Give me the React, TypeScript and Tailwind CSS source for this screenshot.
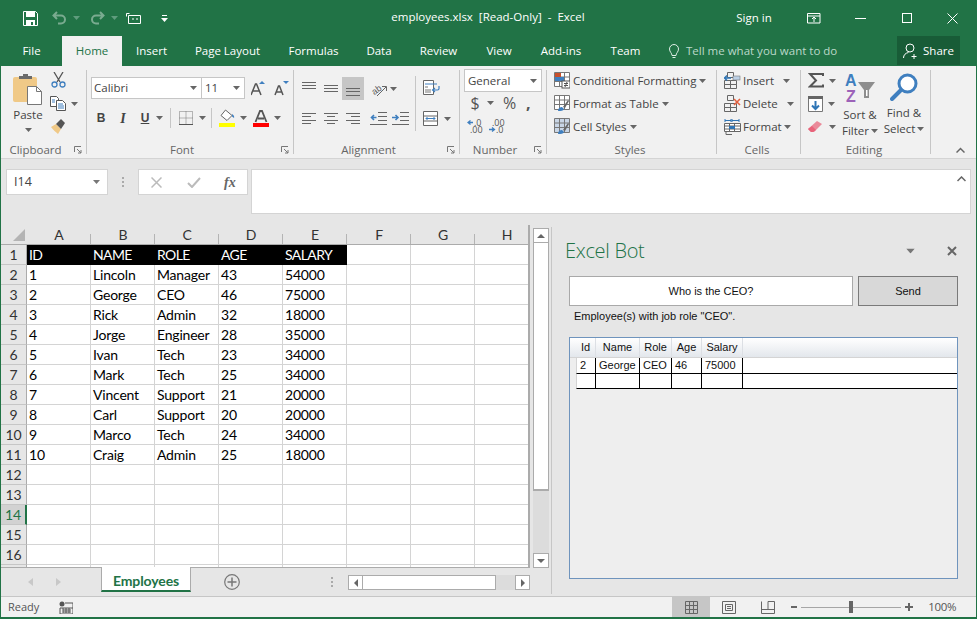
import React from "react";

const Caret = ({ c = "#666", className = "" }: { c?: string; className?: string }) => (
  <svg width="7" height="4" viewBox="0 0 7 4" className={className}><path d="M0 0h7L3.5 4z" fill={c} /></svg>
);

const Launcher = () => (
  <svg width="8" height="8" viewBox="0 0 8 8"><path d="M.5 6V.5H7M3 3l4 4M7 4v3H4" fill="none" stroke="#777" /></svg>
);

const Lines = ({ rows }: { rows: [number, number, number][] }) => (
  <svg width="16" height="14" viewBox="0 0 16 14">
    {rows.map(([x, y, w], i) => <rect key={i} x={x} y={y} width={w} height="1" fill="#666" />)}
  </svg>
);

const Save = () => (
  <svg width="15" height="15" viewBox="0 0 15 15"><path d="M.5.5h12l2 2v12H.5z" fill="none" stroke="#fff" /><rect x="3" y="1" width="9" height="5" fill="#fff" /><rect x="3" y="9" width="9" height="6" fill="#fff" /><rect x="8" y="11" width="2" height="3" fill="#217346" /></svg>
);
const Undo = ({ flip }: { flip?: boolean }) => (
  <svg width="15" height="14" viewBox="0 0 15 14" style={{ transform: flip ? "scaleX(-1)" : undefined }} className="opacity-40"><path d="M5 1 1.5 4.5 5 8M2 4.5h7a4 4 0 0 1 0 8H6" fill="none" stroke="#fff" strokeWidth="2" /></svg>
);

const PasteIcon = () => (
  <svg width="30" height="31" viewBox="0 0 30 31">
    <rect x="0" y="3" width="24" height="25" rx="2" fill="#f0c987" />
    <path d="M6 5V2h4V0h5v2h4v3z" fill="#6b6b6b" />
    <path d="M14.500 12.500h9l5 5v13h-14z" fill="#fff" stroke="#777" />
    <path d="M23.500 12.500v5h5" fill="none" stroke="#777" />
  </svg>
);
const Cut = () => (
  <svg width="15" height="16" viewBox="0 0 15 16"><path d="M3 0l6 10M12 0L6 10" stroke="#555" strokeWidth="1.300" fill="none" /><circle cx="3.500" cy="12.500" r="2.500" fill="none" stroke="#3f7fbf" strokeWidth="1.300" /><circle cx="11.500" cy="12.500" r="2.500" fill="none" stroke="#3f7fbf" strokeWidth="1.300" /></svg>
);
const Copy = () => (
  <svg width="16" height="15" viewBox="0 0 16 15"><path d="M.5.5h6l2 2v8H.5z" fill="#fff" stroke="#555" /><path d="M6.500 4.500h6l3 3v7h-9z" fill="#fff" stroke="#555" /><path d="M8 8h5M8 10h6M8 12h6M2 4h3M2 6h3" stroke="#3f7fbf" /></svg>
);
const Painter = () => (
  <svg width="17" height="16" viewBox="0 0 17 16"><path d="M1 9l5-3 5 5-3 5C6 14 3 12 1 9z" fill="#f0c987" /><path d="M6 6l5-5 4 4-4 6z" fill="#555" /></svg>
);
const FontGrow = ({ up }: { up: boolean }) => (
  <svg width="15" height="15" viewBox="0 0 15 15">
    <path d={up ? "M0 14 4.500 3h1L10 14M2 10h6" : "M1 14 4.500 5h1L9 14M2.500 11h5"} fill="none" stroke="#555" strokeWidth="1.500" />
    <path d={up ? "M8 3l3-3 3 3z" : "M9 0h6l-3 3z"} fill="#3f7fbf" />
  </svg>
);
const Borders = () => (
  <svg width="14" height="14" viewBox="0 0 14 14">
    <path d="M.5.5h13v13H.5zM7 .5v13M.5 7h13" fill="none" stroke="#777" strokeDasharray="1 1" />
    <rect y="13" width="14" height="1" fill="#555" />
  </svg>
);
const FillColor = () => (
  <svg width="16" height="18" viewBox="0 0 16 18">
    <path d="M6.500 1 13 6.500 8 11.500 2 6.500z" fill="#fff" stroke="#666" />
    <path d="M13 5c2 1 2.500 3 2 4l-2-1.500z" fill="#3f7fbf" />
    <rect y="14" width="16" height="4" fill="#ffff00" />
  </svg>
);
const FontColor = () => (
  <svg width="16" height="17" viewBox="0 0 16 17">
    <path d="M2.500 12 7 1h2l4.500 11M5 8.500h6" fill="none" stroke="#555" strokeWidth="1.800" />
    <rect y="13" width="16" height="4" fill="#ff0000" />
  </svg>
);
const Orient = () => (
  <svg width="18" height="16" viewBox="0 0 18 16"><text x="1" y="12" fontSize="9" fill="#555" transform="rotate(-35 6 8)" fontFamily="Liberation Sans">ab</text><path d="M7 15 16 6M12 5.500h4.500V10" fill="none" stroke="#666" /></svg>
);
const Wrap = () => (
  <svg width="17" height="15" viewBox="0 0 17 15"><path d="M.5.5h10v14H.5z" fill="#fff" stroke="#666" /><path d="M2 4h12" stroke="#3f7fbf" /><path d="M2 7h3M2 10h6M2 12h6" stroke="#777" /><path d="M16 6v2.500a1.500 1.500 0 0 1-1.500 1.500H10M12 8l-2.500 2 2.500 2" fill="none" stroke="#3f7fbf" strokeWidth="1.200" /></svg>
);
const Merge = () => (
  <svg width="15" height="15" viewBox="0 0 15 15"><path d="M.5.500h14v14H.5zM.5 5h14M.5 10h14" fill="#fff" stroke="#666" /><path d="M3 7.500h9M4.500 6 3 7.500 4.500 9M10.500 6 12 7.500 10.500 9" fill="none" stroke="#3f7fbf" /></svg>
);
const Indent = ({ inc }: { inc: boolean }) => (
  <svg width="17" height="14" viewBox="0 0 17 14">
    <path d="M8 .5h9M8 4.500h9M8 8.500h9M0 12.500h17" stroke="#666" />
    <path d={inc ? "M0 5.500h5M3.500 3l2.500 2.500L3.500 8" : "M1.500 5.500h5M4 3 1.500 5.500 4 8"} fill="none" stroke="#3f7fbf" strokeWidth="1.600" />
  </svg>
);
const Dec = ({ inc }: { inc: boolean }) => (
  <svg width="16" height="15" viewBox="0 0 16 15" fontFamily="Open Sans" fontSize="9" fill="#555">
    {inc ? <>
      <text x="3" y="7">.00</text>
      <path d="M0 10.500h5M3 8.500l2.500 2-2.500 2" fill="none" stroke="#3f7fbf" strokeWidth="1.300" />
      <text x="7" y="14">.0</text>
    </> : <>
      <path d="M6 3.500H1M3.500 1.500 1 3.500l2.500 2" fill="none" stroke="#3f7fbf" strokeWidth="1.300" />
      <text x="7" y="7">.0</text>
      <text x="3" y="14">.00</text>
    </>}
  </svg>
);
const StyleIcon = ({ kind }: { kind: number }) => (
  <svg width="16" height="17" viewBox="0 0 16 17">
    <path d="M.5.500h15v14H.5zM.5 5h15M.5 9.500h15M5.500.5v14M10.500.5v14" fill={kind === 2 ? "#c9d6e6" : "#fff"} stroke="#777" />
    {kind === 0 && <><rect x="1" y="1" width="6" height="4" fill="#c8502c" /><rect x="1" y="5" width="9" height="4" fill="#3f7fbf" /><rect x="8" y="9" width="8" height="7" fill="#fff" stroke="#555" /><path d="M10 11.500h4M10 13.500h4M11 15l2-5" stroke="#555" /></>}
    {kind !== 0 && <><path d="M9 12l5-7 1 1-4 7z" fill="#666" /><path d="M4 16c0-3 2-4 4-4l2 2c-1 2-3 2-6 2z" fill="#3f7fbf" /></>}
  </svg>
);
const CellIcon = ({ kind }: { kind: number }) => (
  <svg width="17" height="17" viewBox="0 0 17 17">
    {kind < 2 ? <>
      <path d="M3.500.5h6v5h-6zM.5 8.500h6v4h-6zM6.500 8.500h6v4h-6zM.5 12.500h6v4h-6zM6.500 12.500h6v4h-6z" fill="none" stroke="#666" />
      {kind === 0 ? <><rect x="9" y="4" width="7" height="4" fill="#bcd0e6" stroke="#777" strokeWidth=".6" /><path d="M0 6h7M3 3.500.5 6 3 8.500" fill="none" stroke="#2f75b5" strokeWidth="1.500" /></> : <path d="M10 4l6 6M16 4l-6 6" stroke="#e2603f" strokeWidth="1.600" />}
    </> : <>
      <path d="M1 1v3M1 2.500h6M7 1v3M8 1v3M8 2.500h7M15 1v3" stroke="#2f75b5" fill="none" />
      <path d="M.5 5.500h16v8H.5zM.5 8h16M.5 11h16M5.500 5.500v8M10.500 5.500v8" fill="#fff" stroke="#666" />
      <rect x="5" y="8" width="6" height="3" fill="#2f75b5" />
      <path d="M2 14v2.500h6" fill="none" stroke="#666" />
    </>}
  </svg>
);
const Sigma = () => (
  <svg width="16" height="15" viewBox="0 0 16 15"><path d="M15 3V1H2l6 6.500L2 13.500h13v-2" fill="none" stroke="#555" strokeWidth="2" /></svg>
);
const FillDown = () => (
  <svg width="15" height="16" viewBox="0 0 15 16"><path d="M.5.500h14v15H.5z" fill="#fff" stroke="#777" /><rect width="15" height="3" fill="#666" /><path d="M7.500 5v8M4 9.500l3.500 3.500L11 9.500" fill="none" stroke="#2f75b5" strokeWidth="2" /></svg>
);
const Eraser = () => (
  <svg width="15" height="12" viewBox="0 0 15 12"><path d="M0 8 9 0l5 3-8 8H3z" fill="#ea8a9a" /><path d="M0 8l4-3 4 4-3 2H3z" fill="#e8637a" /></svg>
);
const SortIcon = () => (
  <svg width="31" height="30" viewBox="0 0 31 30">
    <text x="0" y="13" fontSize="16" fontWeight="700" fill="#3f7fbf" fontFamily="Liberation Sans">A</text>
    <text x="1" y="29" fontSize="16" fontWeight="700" fill="#9c62b8" fontFamily="Liberation Sans">Z</text>
    <path d="M13 9h17l-6 8v8h-5v-8z" fill="#8e8e8e" />
    <path d="M21 17h1.500v6H21z" fill="#fff" />
  </svg>
);
const FindIcon = () => (
  <svg width="28" height="28" viewBox="0 0 28 28"><circle cx="17.500" cy="10.500" r="8.500" fill="#fff" stroke="#3f7fbf" strokeWidth="3" /><path d="M11 17 2 26" stroke="#3f7fbf" strokeWidth="4" strokeLinecap="round" /></svg>
);

const Group = ({ w, label, launcher, children }: { w: string; label: string; launcher?: boolean; children: React.ReactNode }) => (
  <div className={`${w} h-[84px] mt-[4px] border-r border-[#c6c6c6] flex flex-col`}>
    <div className="h-[74px] shrink-0 flex">{children}</div>
    <div className={`relative h-[12px] shrink-0 flex items-center justify-center text-[11.500px] leading-[12px] text-[#666] ${launcher ? "pr-[16px]" : "pr-[3px]"}`}>
      <span>{label}</span>
      {launcher && <span className="absolute right-[4px] top-[2px] flex"><Launcher /></span>}
    </div>
  </div>
);

const Small = ({ children, cls = "" }: { children: React.ReactNode; cls?: string }) => (
  <div className={`flex items-center h-[23px] ${cls}`}>{children}</div>
);

const tabs: [string, string][] = [["File", "w-[61px]"], ["Home", "w-[60px]"], ["Insert", "w-[59px]"], ["Page Layout", "w-[93px]"], ["Formulas", "w-[79px]"], ["Data", "w-[52px]"], ["Review", "w-[67px]"], ["View", "w-[54px]"], ["Add-ins", "w-[70px]"], ["Team", "w-[59px]"]];

const TitleBar = () => (
  <div className="relative h-[36px] bg-[#217346] flex items-center text-white">
    <div className="ml-[22px] flex"><Save /></div>
    <div className="ml-[14px] flex"><Undo /></div>
    <Caret c="#5f9c7d" className="ml-[6px]" />
    <div className="ml-[10px] flex"><Undo flip /></div>
    <Caret c="#5f9c7d" className="ml-[6px]" />
    <svg width="15" height="11" viewBox="0 0 15 11" className="ml-[8px]"><path d="M.5.500h3M.5.500v3M2.500 2.500h12v8h-12z" fill="none" stroke="#fff" /><path d="M6 6h2M10 6h2" stroke="#fff" /></svg>
    <svg width="7" height="7" viewBox="0 0 7 7" className="ml-[20px]"><path d="M1 .5h5" stroke="#fff" /><path d="M0 3h7L3.500 7z" fill="#fff" /></svg>
    <div className="absolute left-[391px] top-0 h-[33px] w-[192px] flex items-center justify-center whitespace-pre">employees.xlsx  [Read-Only]  -  Excel</div>
    <div className="ml-auto flex items-center">
      <span className="w-[40px] text-center">Sign in</span>
      <svg width="14" height="11" viewBox="0 0 14 11" className="ml-[33px]"><path d="M.5.500h12.500v9.500H.5zM.5 3h12.500M7 9V4M5 6l2-2 2 2" fill="none" stroke="#fff" /></svg>
      <svg width="11" height="1" viewBox="0 0 11 1" className="ml-[34px]"><rect width="11" height="1" fill="#fff" /></svg>
      <svg width="10" height="10" viewBox="0 0 10 10" className="ml-[36px]"><rect x=".5" y=".5" width="9" height="9" fill="none" stroke="#fff" /></svg>
      <svg width="11" height="11" viewBox="0 0 11 11" className="ml-[35px] mr-[18px]"><path d="M.5.500l10 10M10.500.500l-10 10" stroke="#fff" /></svg>
    </div>
  </div>
);

const TabsRow = () => (
  <div className="h-[30px] bg-[#217346] flex items-stretch text-white">
    {tabs.map(([t, w]) => (
      <div key={t} className={`${w} flex items-center justify-center ${t === "Home" ? "bg-[#f1f1f1] text-[#217346]" : ""}`}>{t}</div>
    ))}
    <svg width="10" height="15" viewBox="0 0 10 15" className="ml-[14px] self-center"><path d="M3 11.500C3 9 .5 8 .5 5a4.500 4.500 0 0 1 9 0c0 3-2.500 4-2.500 6.500zM3.500 13.500h3" fill="none" stroke="#dfeee6" /></svg>
    <div className="ml-[7px] flex items-center text-[#bcd8c9]">Tell me what you want to do</div>
    <div className="ml-auto mr-[16px] mb-[1px] w-[63px] bg-[#185c37] flex items-center justify-center gap-[3px]">
      <svg width="17" height="16" viewBox="0 0 17 16"><circle cx="7" cy="5" r="4" fill="none" stroke="#fff" /><path d="M.5 15c0-3 2-5 5-5.500M11 11v5M8.500 13.500h5" fill="none" stroke="#fff" /></svg>
      <span>Share</span>
    </div>
  </div>
);

const Ribbon = () => (
  <div className="relative h-[93px] bg-[#f1f1f1] border-b border-[#d4d4d4] flex text-[#444]">
    <Group w="w-[86px]" label="Clipboard" launcher>
      <div className="ml-[12px] w-[30px] flex flex-col items-center">
        <div className="mt-[4px] flex"><PasteIcon /></div>
        <div className="mt-[2px] leading-[16px]">Paste</div>
        <Caret className="mt-[5px]" />
      </div>
      <div className="ml-[7px] flex flex-col">
        <div className="mt-[2px] flex h-[16px] ml-px"><Cut /></div>
        <div className="mt-[8px] flex items-center h-[15px]"><Copy /><Caret className="ml-[5px]" /></div>
        <div className="mt-[7px] flex"><Painter /></div>
      </div>
    </Group>
    <Group w="w-[207px]" label="Font" launcher>
      <div className="flex flex-col">
        <div className="mt-[7px] flex items-center">
          <div className="ml-[4px] w-[111px] h-[22px] bg-white border border-[#c6c6c6] flex items-center px-[2px] justify-between"><span>Calibri</span><Caret className="mr-[2px]" /></div>
          <div className="-ml-px w-[44px] h-[22px] bg-white border border-[#c6c6c6] flex items-center px-[3px] justify-between"><span>11</span><Caret className="mr-px" /></div>
          <div className="ml-[6px] flex"><FontGrow up /></div>
          <div className="ml-[8px] flex"><FontGrow up={false} /></div>
        </div>
        <div className="mt-[8px] flex items-center h-[22px] text-[14px]">
          <span className="ml-[9px] w-[10px] font-bold font-['Liberation_Sans',sans-serif] text-[12px] text-center">B</span>
          <span className="ml-[12px] w-[10px] italic font-bold font-['Liberation_Serif',serif] text-center">I</span>
          <span className="ml-[12px] w-[10px] underline font-bold font-['Liberation_Sans',sans-serif] text-[12px] text-center">U</span>
          <Caret className="ml-[6px]" />
          <div className="ml-[7px] w-px h-[20px] bg-[#c6c6c6]" />
          <div className="ml-[8px] flex"><Borders /></div>
          <Caret className="ml-[6px]" />
          <div className="ml-[5px] w-px h-[20px] bg-[#c6c6c6]" />
          <div className="ml-[7px] flex"><FillColor /></div>
          <Caret className="ml-[5px]" />
          <div className="ml-[6px] flex"><FontColor /></div>
          <Caret className="ml-[5px]" />
        </div>
      </div>
    </Group>
    <Group w="w-[166px]" label="Alignment" launcher>
      <div className="w-[121px] flex flex-col shrink-0">
        <div className="mt-[7px] flex items-center h-[23px]">
          <div className="ml-[8px] flex"><Lines rows={[[0, 0, 14], [0, 3, 14], [0, 6, 14]]} /></div>
          <div className="ml-[6px] flex"><Lines rows={[[0, 3, 14], [0, 6, 14], [0, 9, 14]]} /></div>
          <div className="ml-[2px] w-[22px] h-[23px] bg-[#c6c6c6] flex items-center justify-center pl-px"><Lines rows={[[0, 6, 14], [0, 9, 14], [0, 13, 14]]} /></div>
          <div className="ml-[6px] flex"><Orient /></div>
          <Caret className="ml-[2px]" />
        </div>
        <div className="mt-[7px] flex items-center h-[23px]">
          <div className="ml-[8px] flex"><Lines rows={[[0, 1, 14], [0, 4, 9], [0, 8, 14], [0, 11, 9]]} /></div>
          <div className="ml-[6px] flex"><Lines rows={[[0, 1, 14], [3, 4, 8], [0, 8, 14], [3, 11, 8]]} /></div>
          <div className="ml-[6px] flex"><Lines rows={[[0, 1, 14], [5, 4, 9], [0, 8, 14], [5, 11, 9]]} /></div>
          <div className="ml-[8px] flex"><Indent inc={false} /></div>
          <div className="ml-[5px] flex"><Indent inc /></div>
        </div>
      </div>
      <div className="mt-[6px] w-px h-[55px] bg-[#c6c6c6]" />
      <div className="ml-[7px] flex flex-col">
        <div className="mt-[10px] flex"><Wrap /></div>
        <div className="mt-[16px] flex items-center"><Merge /><Caret className="ml-[6px]" /></div>
      </div>
    </Group>
    <Group w="w-[87px]" label="Number" launcher>
      <div className="flex flex-col">
        <div className="ml-[4px] w-[78px] h-[23px] mt-[-1px] bg-white border border-[#c6c6c6] flex items-center justify-between px-[3px]"><span>General</span><Caret className="mr-px" /></div>
        <div className="-mt-px flex items-center h-[24px] text-[16px] leading-[24px] text-[#555]">
          <span className="ml-[10px] w-[10px] text-center">$</span>
          <Caret className="ml-[7px]" />
          <span className="ml-[8px] w-[15px] text-center">%</span>
          <span className="ml-[9px] font-bold w-[5px]">,</span>
        </div>
        <div className="mt-[1px] flex items-center h-[20px]">
          <div className="ml-[7px] flex"><Dec inc={false} /></div>
          <div className="ml-[6px] flex"><Dec inc /></div>
        </div>
      </div>
    </Group>
    <Group w="w-[170px]" label="Styles">
      <div className="ml-[7px] -mt-px flex flex-col">
        <Small><StyleIcon kind={0} /><span className="ml-[3px]">Conditional Formatting</span><Caret className="ml-[3px]" /></Small>
        <Small><StyleIcon kind={1} /><span className="ml-[3px]">Format as Table</span><Caret className="ml-[3px]" /></Small>
        <Small><StyleIcon kind={2} /><span className="ml-[3px]">Cell Styles</span><Caret className="ml-[3px]" /></Small>
      </div>
    </Group>
    <Group w="w-[84px]" label="Cells">
      <div className="ml-[7px] -mt-px flex flex-col">
        <Small><CellIcon kind={0} /><span className="ml-[2px]">Insert</span><Caret className="ml-[9px]" /></Small>
        <Small><CellIcon kind={1} /><span className="ml-[2px]">Delete</span><Caret className="ml-[9px]" /></Small>
        <Small><CellIcon kind={2} /><span className="ml-[2px]">Format</span><Caret className="ml-[2px]" /></Small>
      </div>
    </Group>
    <Group w="w-[130px]" label="Editing">
      <div className="ml-[7px] -mt-px w-[30px] flex flex-col">
        <Small><Sigma /><Caret className="ml-[5px]" /></Small>
        <Small><FillDown /><Caret className="ml-[5px]" /></Small>
        <Small><Eraser /><Caret className="ml-[6px]" /></Small>
      </div>
      <div className="ml-[4px] w-[36px] flex flex-col items-center leading-[16px]">
        <div className="mt-[3px] mb-[3px] flex"><SortIcon /></div>
        <div className="mt-[1px] whitespace-nowrap">Sort &amp;</div>
        <div className="flex items-center whitespace-nowrap">Filter<Caret className="ml-[2px]" /></div>
      </div>
      <div className="ml-[7px] w-[38px] flex flex-col items-center leading-[16px]">
        <div className="mt-[3px] mb-[3px] flex"><FindIcon /></div>
        <div className="mt-[1px] whitespace-nowrap">Find &amp;</div>
        <div className="flex items-center whitespace-nowrap">Select<Caret className="ml-[2px]" /></div>
      </div>
    </Group>
    <div className="flex-1 flex items-end justify-end pr-[11px] pb-[5px]">
      <svg width="9" height="6" viewBox="0 0 9 6"><path d="M.5 5.500 4.500 1.500l4 4" fill="none" stroke="#666" strokeWidth="1.500" /></svg>
    </div>
  </div>
);

const FormulaBar = () => (
  <div className="h-[66px] bg-[#e6e6e6] flex pl-[5px] pt-[10px] text-[#444]">
    <div className="w-[102px] h-[26px] bg-white border border-[#d4d4d4] flex items-center justify-between pl-[7px] pr-[7px]">
      <span className="text-[12.500px]">I14</span><Caret c="#777" />
    </div>
    <div className="w-[30px] h-[26px] flex items-center justify-center">
      <svg width="2" height="10" viewBox="0 0 2 10"><path d="M0 0h2v2H0zM0 4h2v2H0zM0 8h2v2H0z" fill="#aaa" /></svg>
    </div>
    <div className="w-[110px] h-[26px] bg-white border border-[#d4d4d4] flex items-center">
      <svg width="11" height="11" viewBox="0 0 11 11" className="ml-[12px]"><path d="M.5.500l10 10M10.500.500l-10 10" stroke="#bbb" strokeWidth="1.500" /></svg>
      <svg width="14" height="11" viewBox="0 0 14 11" className="ml-[25px]"><path d="M1 6l4 4L13 1" fill="none" stroke="#bbb" strokeWidth="2" /></svg>
      <span className="ml-[23px] italic font-bold text-[14px] text-[#666] font-['Liberation_Serif',serif]">fx</span>
    </div>
    <div className="ml-[3px] w-[720px] h-[45px] bg-white border border-[#d4d4d4] flex justify-end pr-[4px] pt-[6px]">
      <svg width="9" height="6" viewBox="0 0 9 6"><path d="M.5 5 4.500 1l4 4" fill="none" stroke="#666" strokeWidth="1.500" /></svg>
    </div>
  </div>
);

const rows: string[][] = [
  ["ID", "NAME", "ROLE", "AGE", "SALARY"],
  ["1", "Lincoln", "Manager", "43", "54000"],
  ["2", "George", "CEO", "46", "75000"],
  ["3", "Rick", "Admin", "32", "18000"],
  ["4", "Jorge", "Engineer", "28", "35000"],
  ["5", "Ivan", "Tech", "23", "34000"],
  ["6", "Mark", "Tech", "25", "34000"],
  ["7", "Vincent", "Support", "21", "20000"],
  ["8", "Carl", "Support", "20", "20000"],
  ["9", "Marco", "Tech", "24", "34000"],
  ["10", "Craig", "Admin", "25", "18000"],
];
const cols = ["A", "B", "C", "D", "E", "F", "G", "H"];

const Sheet = () => (
  <div className="w-[529px] h-[343px] flex flex-col overflow-hidden border-r-2 border-b border-[#ababab] font-['Lato',sans-serif] text-[14px] tracking-[-0.2px]">
    <div className="h-[20px] flex bg-[#e6e6e6] border-b border-[#ababab] shrink-0 text-[#333]">
      <div className="w-[26px] shrink-0 flex items-end justify-end p-[3px] pr-[2px]">
        <svg width="12" height="12" viewBox="0 0 12 12"><path d="M12 0v12H0z" fill="#b4b4b4" /></svg>
      </div>
      {cols.map((c) => (
        <div key={c} className="w-[64px] shrink-0 relative flex items-center justify-center">
          {c}
          <span className="absolute right-0 bottom-0 w-px h-[10px] bg-[#b4b4b4]" />
        </div>
      ))}
    </div>
    {Array.from({ length: 17 }, (_, r) => (
      <div key={r} className="h-[20px] flex shrink-0 bg-white">
        <div className={`w-[26px] shrink-0 flex items-center justify-center border-b border-[#c6c6c6] ${r === 13 ? "bg-[#d2d2d2] text-[#217346] border-r-2 border-r-[#217346]" : "bg-[#e6e6e6] text-[#333] border-r border-r-[#ababab]"}`}>{r + 1}</div>
        {cols.map((c, i) => (
          <div key={c} className={`w-[64px] shrink-0 pl-[2px] flex items-center whitespace-nowrap border-r border-b ${r === 0 ? "tracking-[-0.6px]" : ""} ${r === 0 && i < 5 ? "bg-black text-white border-black" : "border-[#d4d4d4] text-black"}`}>{rows[r]?.[i] ?? ""}</div>
        ))}
      </div>
    ))}
  </div>
);

const ScrollBtn = ({ d, cls = "" }: { d: string; cls?: string }) => (
  <div className={`bg-white border border-[#ababab] flex items-center justify-center ${cls}`}>
    <svg width="8" height="8" viewBox="0 0 8 8"><path d={d} fill="#666" /></svg>
  </div>
);

const VScroll = () => (
  <div className="ml-[3px] w-[16px] h-[340px] mt-[3px] flex flex-col bg-[#dcdcdc]">
    <ScrollBtn d="M0 6h8L4 2z" cls="h-[15px] shrink-0" />
    <div className="h-[248px] bg-white border-x border-b-2 border-[#ababab]" />
    <div className="flex-1" />
    <ScrollBtn d="M0 2h8L4 6z" cls="h-[15px] shrink-0" />
  </div>
);

const TabBar = () => (
  <div className="h-[28px] flex items-start font-['Lato',sans-serif] relative">
    <div className="w-[100px] h-[27px] flex items-center text-[#c8c8c8]">
      <svg width="5" height="8" viewBox="0 0 5 8" className="ml-[27px]"><path d="M5 0v8L0 4z" fill="#c8c8c8" /></svg>
      <svg width="5" height="8" viewBox="0 0 5 8" className="ml-[23px]"><path d="M0 0v8l5-4z" fill="#c8c8c8" /></svg>
    </div>
    <div className="-mt-px w-[90px] h-[25px] pt-[3px] bg-white border-x border-[#ababab] border-b-2 border-b-[#217346] flex items-center justify-center font-bold text-[14px] tracking-[-0.1px] text-[#217346]">Employees</div>
    <svg width="16" height="16" viewBox="0 0 16 16" className="ml-[33px] mt-[6px]"><circle cx="8" cy="8" r="7.300" fill="none" stroke="#777" strokeWidth="1.200" /><path d="M8 3.500v9M3.500 8h9" stroke="#777" strokeWidth="1.500" /></svg>
    <svg width="2" height="10" viewBox="0 0 2 10" className="ml-[91px] mt-[9px]"><path d="M0 0h2v2H0zM0 4h2v2H0zM0 8h2v2H0z" fill="#aaa" /></svg>
    <div className="ml-[15px] mt-[7px] w-[182px] h-[15px] flex bg-[#dcdcdc]">
      <ScrollBtn d="M6 0v8L2 4z" cls="w-[15px] shrink-0" />
      <div className="w-[133px] bg-white border-y border-r border-[#ababab]" />
      <div className="flex-1" />
      <ScrollBtn d="M2 0v8l4-4z" cls="w-[15px] shrink-0" />
    </div>
  </div>
);

const Pane = () => (
  <div className="flex-1 mt-[2px] mb-[2px] border-l border-[#c6c6c6] pl-[17px] pr-[18px] flex flex-col font-['Liberation_Sans',sans-serif] text-[11px]">
    <div className="h-[46px] flex items-center -ml-[4px] pt-[1px]">
      <span className="text-[20px] font-light text-[#217346] font-['Open_Sans',sans-serif] tracking-[-0.3px]">Excel Bot</span>
      <Caret c="#777" className="ml-auto mr-[33px] scale-125" />
      <svg width="10" height="10" viewBox="0 0 10 10" className="mr-px"><path d="M1 1l8 8M9 1 1 9" stroke="#666" strokeWidth="2" /></svg>
    </div>
    <div className="mt-[3px] flex justify-between h-[30px]">
      <div className="w-[284px] bg-white border border-[#a9a9a9] flex items-center justify-center text-[#111]">Who is the CEO?</div>
      <div className="w-[100px] bg-[#d8d8d8] border border-[#7a7a7a] flex items-center justify-center text-[#111]">Send</div>
    </div>
    <div className="mt-[2px] ml-[5px] h-[17px] flex items-center text-[#111]">Employee(s) with job role "CEO".</div>
    <div className="mt-[12px] h-[242px] border border-[#6f94bd] bg-[#eeeeee] flex flex-col text-[#111]">
      <div className="h-[20px] flex bg-gradient-to-b from-white to-[#e3e7ec] border-b border-[#d4d4d4]">
        <div className="w-[6px]" />
        {[["Id", "w-[20px]"], ["Name", "w-[44px]"], ["Role", "w-[32px]"], ["Age", "w-[30px]"], ["Salary", "w-[41px]"]].map(([t, w]) => (
          <div key={t} className={`${w} flex items-center justify-center border-r border-[#dcdfe4]`}>{t}</div>
        ))}
      </div>
      {[["2", "George", "CEO", "46", "75000"], ["", "", "", "", ""]].map((r, i) => (
        <div key={i} className={`flex ${i === 0 ? "h-[16px]" : "h-[15px]"}`}>
          <div className="w-[6px] shrink-0" />
          <div className="flex-1 flex bg-white border-b border-black border-l border-l-[#d4d4d4]">
            {["w-[19px]", "w-[44px]", "w-[32px]", "w-[30px]", "w-[41px]"].map((w, j) => (
              <div key={j} className={`${w} pl-[3px] flex items-center border-r border-black whitespace-nowrap`}>{r[j]}</div>
            ))}
          </div>
        </div>
      ))}
    </div>
  </div>
);

const StatusBar = () => (
  <div className="h-[21px] bg-[#f1f1f1] border-t border-[#c6c6c6] flex items-center text-[11px] text-[#555]">
    <span className="ml-[7px]">Ready</span>
    <svg width="14" height="13" viewBox="0 0 14 13" className="ml-[20px]"><circle cx="3" cy="3" r="2.500" fill="#555" /><path d="M6 2h8v11H1V7h13M4 9h8M4 11h8M4 7v5M7 7v5M10 7v5" fill="none" stroke="#555" /></svg>
    <div className="ml-auto h-[20px] w-[38px] bg-[#c6c6c6] flex items-center justify-center">
      <svg width="13" height="13" viewBox="0 0 13 13"><path d="M.5.500h12v12H.5zM4.500.5v12M8.500.5v12M.5 4.500h12M.5 8.500h12" fill="none" stroke="#666" /></svg>
    </div>
    <svg width="14" height="13" viewBox="0 0 14 13" className="ml-[12px]"><path d="M.5.500h13v12H.5zM3.500 3.500h7v6h-7zM5 5.500h4M5 7.500h4" fill="none" stroke="#666" /></svg>
    <svg width="14" height="13" viewBox="0 0 14 13" className="ml-[25px]"><path d="M.5.500v12h13V.5M.5 8.500h13M7 .5v8M7 .5h6.500" fill="none" stroke="#666" /></svg>
    <svg width="6" height="2" viewBox="0 0 6 2" className="ml-[16px]"><rect width="6" height="2" fill="#666" /></svg>
    <div className="ml-[4px] w-[100px] h-[12px] flex items-center relative">
      <div className="w-full h-px bg-[#a6a6a6]" />
      <div className="absolute left-[48px] top-0 w-[4px] h-[12px] bg-[#666]" />
    </div>
    <svg width="8" height="8" viewBox="0 0 8 8" className="ml-[4px]"><path d="M3 0h2v3h3v2H5v3H3V5H0V3h3z" fill="#666" /></svg>
    <span className="ml-[15px] mr-[20px] text-[11.500px] tracking-[-0.4px]">100%</span>
  </div>
);

export default function App() {
  return (
    <div className="w-[977px] h-[619px] overflow-hidden flex flex-col bg-[#e6e6e6] border-x border-b-2 border-[#217346] font-['Open_Sans',sans-serif] text-[11.500px]">
      <TitleBar />
      <TabsRow />
      <Ribbon />
      <FormulaBar />
      <div className="flex-1 flex min-h-0">
        <div className="w-[550px] shrink-0 flex flex-col">
          <div className="flex h-[343px] shrink-0">
            <Sheet />
            <VScroll />
          </div>
          <TabBar />
        </div>
        <Pane />
      </div>
      <StatusBar />
    </div>
  );
}
